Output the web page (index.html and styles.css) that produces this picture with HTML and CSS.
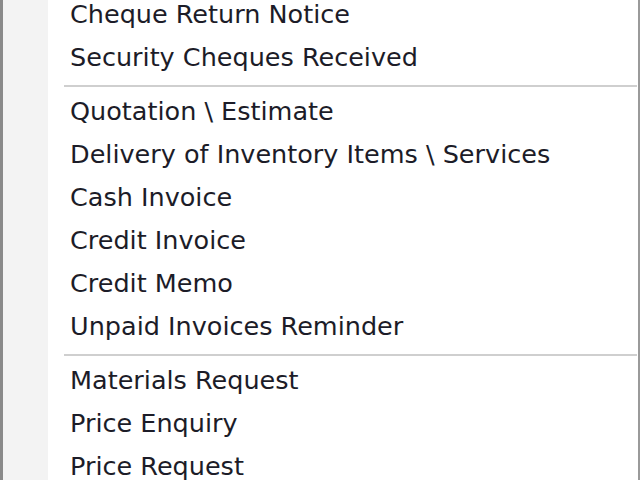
FILE: index.html
```html
<!DOCTYPE html>
<html>
<head>
<meta charset="utf-8">
<link rel="stylesheet" href="styles.css">
</head>
<body>
<div class="menu">
  <div class="gutter"></div>
  <ul class="items">
    <li class="item">Cheque Return Notice</li>
    <li class="item">Security Cheques Received</li>
    <li class="sep"></li>
    <li class="item">Quotation \ Estimate</li>
    <li class="item">Delivery of Inventory Items \ Services</li>
    <li class="item">Cash Invoice</li>
    <li class="item">Credit Invoice</li>
    <li class="item">Credit Memo</li>
    <li class="item">Unpaid Invoices Reminder</li>
    <li class="sep"></li>
    <li class="item">Materials Request</li>
    <li class="item">Price Enquiry</li>
    <li class="item">Price Request</li>
  </ul>
</div>
</body>
</html>
```
FILE: styles.css
```css
html, body {
  margin: 0;
  padding: 0;
  background: #ffffff;
}
.menu {
  width: 640px;
  height: 480px;
  overflow: hidden;
  display: flex;
  background: #ffffff;
  border-left: 3px solid #8a8a8a;
  border-right: 2px solid #9a9a9a;
  box-sizing: border-box;
  margin-right: 2px;
}
.gutter {
  width: 45px;
  flex: none;
  background: #f3f3f3;
}
.items {
  list-style: none;
  margin: -7px 0 0 0;
  padding: 0 0 0 16px;
  flex: 1;
}
.item {
  height: 43px;
  line-height: 43px;
  padding-left: 6px;
  font-family: "DejaVu Sans", sans-serif;
  font-size: 25.5px;
  color: #1c1c28;
  white-space: nowrap;
}
.sep {
  height: 2px;
  background: #cfcfcf;
  margin: 6px 1px 3px 0;
}
```
